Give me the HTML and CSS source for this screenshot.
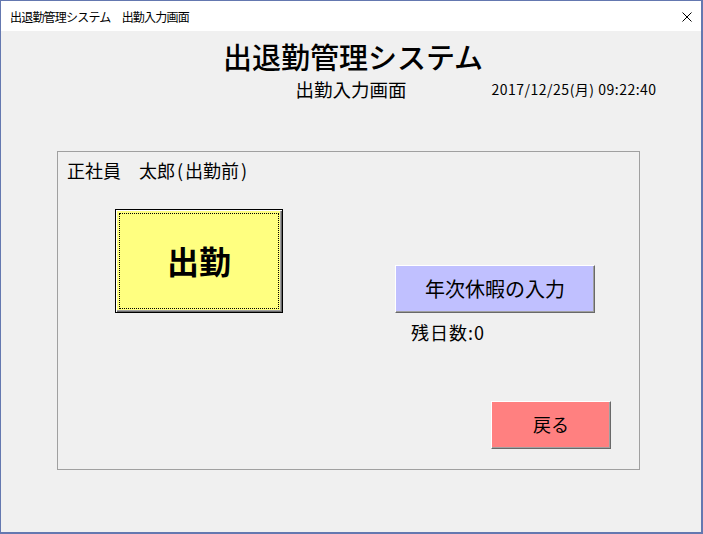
FILE: index.html
```html
<!DOCTYPE html>
<html lang="ja">
<head>
<meta charset="utf-8">
<title>出退勤管理システム　出勤入力画面</title>
<link rel="stylesheet" href="styles.css">
</head>
<body>
<div class="window">
  <div class="titlebar">
    <span class="caption">出退勤管理システム　出勤入力画面</span>
    <svg class="close" width="10" height="10" viewBox="0 0 10 10"><path d="M0.5 0.5 L9.5 9.5 M9.5 0.5 L0.5 9.5" stroke="#000" stroke-width="1" fill="none"/></svg>
  </div>
  <div class="client">
    <h1 class="title">出退勤管理システム</h1>
    <div class="subrow">
      <div></div>
      <div class="subtitle">出勤入力画面</div>
      <div class="date">2017/12/25(月) 09:22:40</div>
    </div>
    <div class="panel">
      <div class="name">正社員　太郎<span class="paren">(</span>出勤前<span class="paren">)</span></div>
      <div class="row">
        <button class="btn btn-in">出勤</button>
        <div class="rightcol">
          <button class="btn btn-leave">年次休暇の入力</button>
          <div class="remain">残日数:0</div>
          <button class="btn btn-back">戻る</button>
        </div>
      </div>
    </div>
  </div>
</div>
</body>
</html>
```
FILE: styles.css
```css
html, body {
  margin: 0;
  padding: 0;
  background: #f0f0f0;
}
body {
  font-family: "Noto Sans CJK JP", "Noto Sans", sans-serif;
  color: #000;
}
.window {
  width: 703px;
  height: 534px;
  box-sizing: border-box;
  border: 1px solid #6478b0;
  border-right-width: 2px;
  border-bottom-width: 2px;
  background: #f0f0f0;
  overflow: hidden;
}
.titlebar {
  height: 30px;
  background: #fff;
  display: flex;
  align-items: center;
  justify-content: space-between;
  padding: 0 9px 0 9px;
}
.caption {
  font-size: 12px;
  line-height: 14px;
  letter-spacing: -0.8px;
  margin-top: 1px;
}
.close {
  display: block;
  margin-top: 2px;
}
.client {
  display: flex;
  flex-direction: column;
}
.title {
  margin: 8px 0 0 4px;
  font-size: 29px;
  font-weight: 500;
  line-height: 34px;
  text-align: center;
  letter-spacing: 0;
}
.subrow {
  margin-top: 5px;
  display: grid;
  grid-template-columns: 1fr auto 1fr;
  align-items: center;
  height: 22px;
}
.subtitle {
  font-size: 18.5px;
  line-height: 22px;
}
.date {
  font-size: 14px;
  line-height: 16px;
  margin-left: 85px;
  white-space: nowrap;
  letter-spacing: 0.5px;
}
.panel {
  margin: 51px 0 0 56px;
  width: 583px;
  height: 319px;
  box-sizing: border-box;
  border: 1px solid #a0a0a0;
  display: flex;
  flex-direction: column;
}
.name {
  margin: 7px 0 0 9px;
  font-size: 18px;
  line-height: 22px;
  white-space: nowrap;
}
.paren {
  padding: 0 2px;
}
.row {
  display: flex;
  align-items: flex-start;
  margin-top: 28px;
  padding-left: 57px;
}
.btn {
  font-family: "Noto Sans CJK JP", "Noto Sans", sans-serif;
  box-sizing: border-box;
  margin: 0;
  padding: 0;
  color: #000;
  border: 1px solid;
  border-color: #fff #696969 #696969 #fff;
  box-shadow: inset -1px -1px 0 #a0a0a0;
  display: flex;
  align-items: center;
  justify-content: center;
}
.btn-in {
  width: 168px;
  height: 104px;
  background: #ffff80;
  border-color: #000;
  box-shadow: inset 1px 1px 0 #fff, inset -1px -1px 0 #696969, inset -2px -2px 0 #a0a0a0;
  outline: 1px dotted #000;
  outline-offset: -5px;
  font-size: 32px;
  font-weight: 700;
  line-height: 36px;
  padding-bottom: 2px;
}
.rightcol {
  margin: 56px 0 0 112px;
  display: flex;
  flex-direction: column;
  align-items: flex-start;
}
.btn-leave {
  width: 200px;
  height: 48px;
  background: #c0c0ff;
  font-size: 20px;
  line-height: 24px;
  padding-bottom: 1px;
}
.remain {
  margin: 8px 0 0 16px;
  font-size: 18px;
  line-height: 22px;
  letter-spacing: 1px;
}
.btn-back {
  margin: 58px 0 0 96px;
  width: 120px;
  height: 48px;
  background: #ff8080;
  font-size: 18px;
  line-height: 22px;
  padding-bottom: 2px;
}
```
